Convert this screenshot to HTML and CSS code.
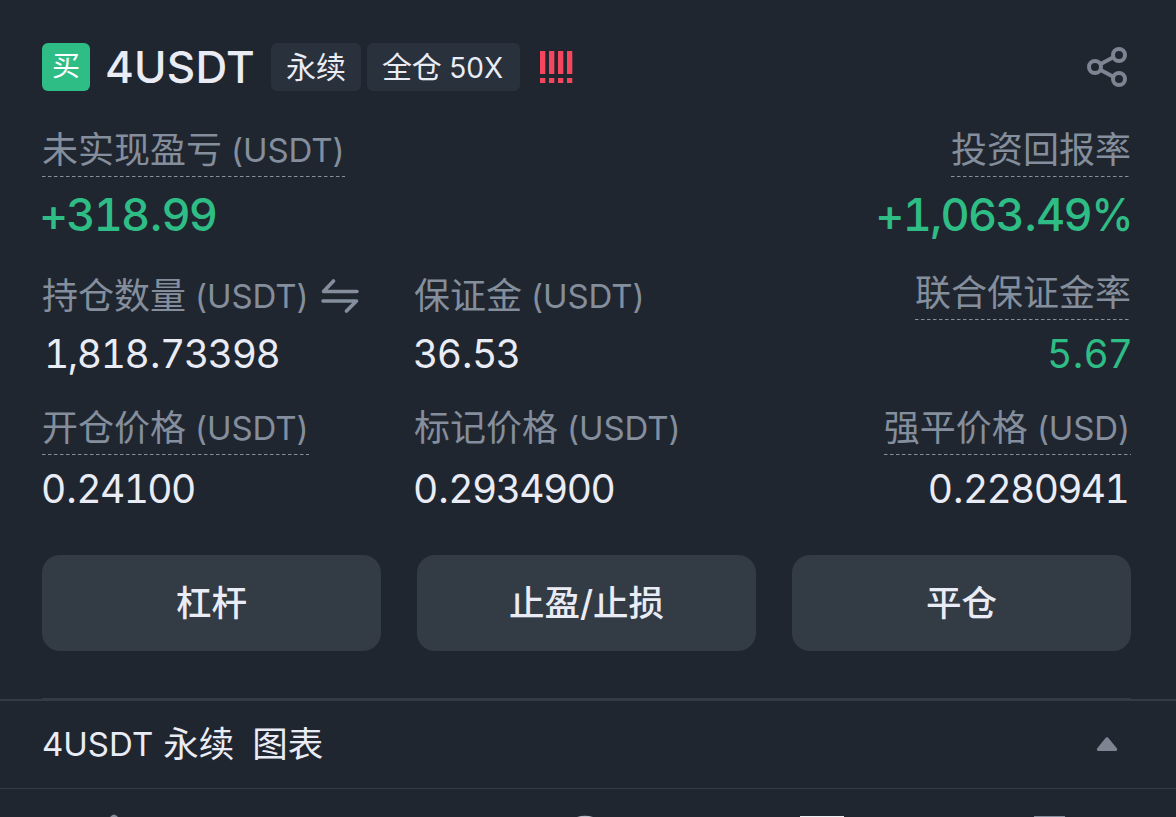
FILE: index.html
```
<!DOCTYPE html>
<html lang="zh-CN">
<head>
<meta charset="utf-8">
<title>4USDT 永续</title>
<link rel="stylesheet" href="styles.css">
</head>
<body>
<main class="screen">
  <section class="position">
    <header class="head">
      <span class="side">买</span>
      <h1 class="symbol">4USDT</h1>
      <span class="tag">永续</span>
      <span class="tag tag-margin">全仓 <span class="tag-num">50X</span></span>
      <svg class="adl" width="34" height="34" viewBox="0 0 34 34" fill="#f6465d"><path d="M1 1h5.300v23H1zM10 1h5.300v23h-5.300zM19 1h5.300v23h-5.300zM28 1h5.300v23h-5.300zM1 28h5.300v5H1zM10 28h5.300v5h-5.300zM19 28h5.300v5h-5.300zM28 28h5.300v5h-5.300z"/></svg>
      <svg class="share" width="42" height="42" viewBox="0 0 42 42" fill="none" stroke="#7d8592" stroke-width="4"><circle cx="9" cy="21" r="6"/><circle cx="33" cy="9" r="6"/><circle cx="33" cy="33" r="6"/><path d="M14.200 18.200L27.800 11M14.200 23.800L27.800 31"/></svg>
    </header>
    <div class="row row-top">
      <div class="cell">
        <div class="label dashed">未实现盈亏 <span class="unit">(USDT)</span></div>
        <div class="big pnl">+318<span class="dot">.</span>99</div>
      </div>
      <div class="cell end">
        <div class="label dashed">投资回报率</div>
        <div class="big roi">+1,063<span class="dot">.</span>49<span class="percent">%</span></div>
      </div>
    </div>
    <div class="row row-mid">
      <div class="cell">
        <div class="label low">持仓数量 <span class="unit">(USDT)</span><svg class="swap" width="38" height="34" viewBox="0 0 38 34" fill="none" stroke="#848e9c" stroke-width="3.600" stroke-linecap="round" stroke-linejoin="round"><path d="M36 12.500H2.500L12.500 2M2 22H35.500L25.500 32"/></svg></div>
        <div class="value v-size">1,818<span class="dot">.</span>73398</div>
      </div>
      <div class="cell">
        <div class="label low">保证金 <span class="unit">(USDT)</span></div>
        <div class="value v-margin">36<span class="dot">.</span>53</div>
      </div>
      <div class="cell end">
        <div class="label dashed">联合保证金率</div>
        <div class="value v-ratio">5<span class="dot">.</span>67</div>
      </div>
    </div>
    <div class="row row-low">
      <div class="cell">
        <div class="label dashed">开仓价格 <span class="unit">(USDT)</span></div>
        <div class="value v-entry">0<span class="dot">.</span>24100</div>
      </div>
      <div class="cell">
        <div class="label">标记价格 <span class="unit">(USDT)</span></div>
        <div class="value v-mark">0<span class="dot">.</span>2934900</div>
      </div>
      <div class="cell end">
        <div class="label dashed">强平价格 <span class="unit">(USD)</span></div>
        <div class="value v-liq">0<span class="dot">.</span>2280941</div>
      </div>
    </div>
    <div class="actions">
      <button class="action">杠杆</button>
      <button class="action">止盈/止损</button>
      <button class="action">平仓</button>
    </div>
  </section>
  <section class="chart-bar">
    <div class="chart-title"><span class="chart-symbol">4USDT</span><span class="chart-kind">永续</span><span class="chart-kind chart-word">图表</span></div>
    <svg class="caret" width="22" height="14" viewBox="0 0 22 14" fill="#7d8592"><path d="M10 .6Q11 -.3 12 .6L21 11.500Q21.500 14 20 14H2Q.5 14 1 11.500Z"/></svg>
  </section>
  <svg class="tabs" width="1176" height="28" viewBox="0 0 1176 28"><path d="M110 28Q114 23 118 28Z" fill="#848e9c"/><path d="M577 28Q585 25.500 593 28Z" fill="#b7bdc6"/><path d="M800 27H844V28H800Z" fill="#eaecef"/><path d="M1034 27H1065V28H1034Z" fill="#848e9c"/></svg>
</main>
</body>
</html>
```
FILE: styles.css
```
* { box-sizing: border-box; }
body {
  margin: 0;
  background: #202630;
  color: #eaecf5;
  font-family: Inter, "Noto Sans CJK SC", sans-serif;
}
.screen { width: 1176px; height: 817px; overflow: hidden; }
.position { height: 699px; margin: 0 45px 0 42px; padding-top: 43px; border-bottom: 1px solid #333b47; }
.head { display: flex; align-items: center; height: 48px; }
.side {
  width: 48px; height: 48px; border-radius: 6px; background: #2ebd85; color: #fff;
  font-size: 28px; line-height: 46px; text-align: center;
}
.symbol { width: 166px; margin: 0 0 0 15px; font-size: 44px; line-height: 46px; font-weight: 500; letter-spacing: 0.2px; white-space: nowrap; }
.tag {
  height: 48px; width: 90px; border-radius: 6px; background: #29313d;
  font-size: 30px; line-height: 48px; text-align: center; white-space: nowrap;
}
.tag-margin { width: 153px; margin-left: 6px; padding-right: 2px; }
.tag-num { margin-left: -1px; font-size: 28px; }
.adl { margin-left: 19px; }
.share { margin: 0 3px 0 auto; }
.row { display: grid; grid-template-columns: 372px 372px 1fr; }
.row-top { grid-template-columns: 1fr 1fr; margin-top: 33px; }
.row-mid { margin-top: 16px; }
.row-low { margin-top: 16px; }
.cell { display: flex; flex-direction: column; align-items: flex-start; white-space: nowrap; }
.end { align-items: flex-end; }
.label { display: flex; align-items: center; gap: 9px; height: 53px; padding-bottom: 1px; font-size: 36px; line-height: 52px; color: #848e9c; }
.low { position: relative; top: 3px; }
.dashed { background: repeating-linear-gradient(90deg, #848e9c 0 3px, transparent 4px 6px) 0 100% / 100% 1px no-repeat; }
.unit { padding-right: 1px; font-size: 33px; letter-spacing: -0.1px; }
.swap { margin-left: 3px; }
.big, .value { font-variant-numeric: tabular-nums; }
.big { height: 74px; font-size: 45px; line-height: 75px; font-weight: 500; color: #2ebd85; }
.value { height: 66px; font-size: 39px; line-height: 67px; letter-spacing: -1.600px; }
.dot { margin: 0 1.200px 0 1.500px; }
.pnl { margin-left: -3px; letter-spacing: -1.800px; }
.roi { margin-right: -1px; letter-spacing: -1.700px; }
.percent { display: inline-block; transform: scaleX(0.94); transform-origin: right; margin-left: -2px; }
.v-size { margin-left: 2px; letter-spacing: -1.450px; }
.v-margin { margin-left: -1px; }
.v-ratio { margin-right: -1px; color: #2ebd85; letter-spacing: -1px; }
.v-entry, .v-mark { margin-left: -1px; }
.v-liq { margin-right: 3px; letter-spacing: -1.700px; }
.actions { display: grid; grid-template-columns: repeat(3, 339px); gap: 36px; margin-top: 34px; }
.action {
  height: 96px; padding: 0; border: 0; border-radius: 18px; background: #333b45; color: #eaecf5;
  font: 500 35.500px/97px Inter, "Noto Sans CJK SC", sans-serif;
}
.chart-bar {
  display: flex; align-items: center; justify-content: space-between; height: 90px;
  padding: 0 58px 0 42px; border-top: 2px solid #333b47; border-bottom: 1px solid #333b47;
}
.chart-title { display: flex; align-items: center; gap: 10px; font-size: 35.500px; line-height: 48px; padding-bottom: 2px; }
.chart-symbol { font-size: 33px; }
.chart-kind { margin-top: 2px; }
.chart-word { margin-left: 8px; }
.caret { margin-bottom: 2px; }
.tabs { display: block; }
```
